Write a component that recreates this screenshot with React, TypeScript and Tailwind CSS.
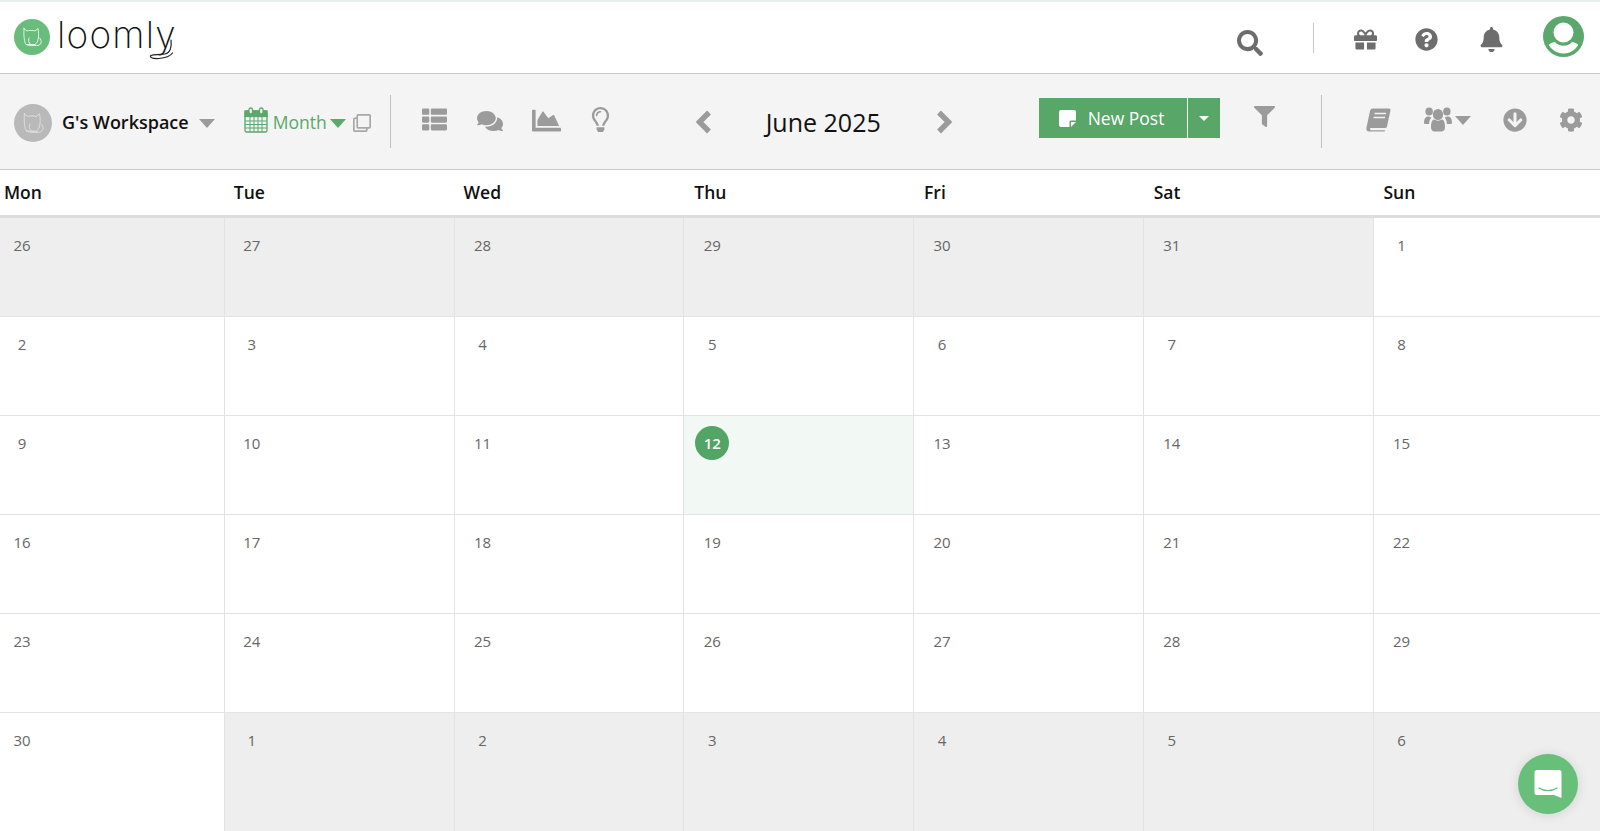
import React from "react";
import {
  FaThList, FaComments, FaChartArea, FaRegLightbulb, FaFilter,
  FaArrowCircleDown, FaCog, FaSearch, FaGift, FaQuestionCircle, FaBell, FaRegClone,
} from "react-icons/fa";

const Cat = ({ color = "#fff", size = 24 }: { color?: string; size?: number }) => (
  <svg width={size} height={size} viewBox="0 0 24 24" fill="none" stroke={color} strokeWidth="0.8" strokeLinecap="round" strokeLinejoin="round">
    <path d="M4 3.5 L7 6 C9 5.2 13 5.2 15 6 L18 3.5 C18.6 7 18.8 10 18.4 13 C18 16 17 18 15 19.5 L6 19.5 C4.5 17 3.5 12 4 3.5 Z" />
    <path d="M9 13 C8 16 9 19 12 20 C15 21 19 21 20.5 19 C22 17 21 14 19.6 13" />
    <path d="M6 19.5 C9 21 13 21 16 20" />
  </svg>
);

const Caret = ({ className }: { className: string }) => (
  <span className={"block w-0 h-0 border-l-[8px] border-r-[8px] border-t-[9px] border-l-transparent border-r-transparent " + className} />
);

const Chevron = ({ dir, className }: { dir: "l" | "r"; className: string }) => (
  <svg width="17" height="24" viewBox="0 0 17 24" className={className} fill="none" stroke="#9b9b9b" strokeWidth="5.4" strokeLinejoin="miter">
    <path d={dir === "l" ? "M14 2.5 L4.5 12 L14 21.5" : "M3 2.5 L12.5 12 L3 21.5"} />
  </svg>
);

const CalendarIcon = () => (
  <svg width="24" height="26" viewBox="0 0 24 26" fill="none" stroke="#5aa86b" strokeWidth="1.3">
    <rect x="1" y="4" width="22" height="21" rx="1.5" fill="#f4f4f4" />
    <rect x="1" y="4" width="22" height="5.5" fill="#5aa86b" />
    <rect x="5" y="1" width="3.5" height="6" rx="1.7" fill="#f4f4f4" />
    <rect x="15.5" y="1" width="3.5" height="6" rx="1.7" fill="#f4f4f4" />
    <path d="M1 14 H23 M1 17.5 H23 M1 21 H23 M6 9.5 V25 M10 9.5 V25 M14 9.5 V25 M18 9.5 V25" strokeWidth="1" />
  </svg>
);

const Note = () => (
  <svg width="17" height="17" viewBox="0 0 17 17">
    <path d="M2 0 H15 a2 2 0 0 1 2 2 V10.5 H12 a1.5 1.5 0 0 0 -1.5 1.5 V17 H2 a2 2 0 0 1 -2 -2 V2 a2 2 0 0 1 2 -2 Z" fill="#fff" />
    <path d="M12 12 H17 L12 17 Z" fill="#fff" />
  </svg>
);

const BookIcon = ({ className }: { className: string }) => (
  <svg width="25" height="24" viewBox="0 0 25 24" className={className}>
    <path d="M7 0.5 H23 a1.5 1.5 0 0 1 1.5 1.8 L21 18.5 a2 2 0 0 1 -2 1.5 H4.5 a1.5 1.5 0 0 0 0 2.2 H19 L18.6 23.5 H3 C0.8 23.5 0 21.5 0.5 19.5 L4 3 C4.4 1.3 5.4 0.5 7 0.5 Z" fill="#9b9b9b" />
    <path d="M8.5 5.5 H20 M7.6 9.5 H19" stroke="#f4f4f4" strokeWidth="1.6" />
  </svg>
);

const UsersIcon = ({ className }: { className: string }) => (
  <svg width="28" height="25" viewBox="0 0 30 25" className={className} fill="#9b9b9b" preserveAspectRatio="none">
    <circle cx="5.5" cy="4.5" r="4" />
    <circle cx="24.5" cy="4.5" r="4" />
    <path d="M0 16 C0 11 2 9.5 5 9.5 L8 10.5 C6.5 12 5.5 14 5.5 17 H2 C0.8 17 0 16.8 0 16 Z" />
    <path d="M30 16 C30 11 28 9.5 25 9.5 L22 10.5 C23.5 12 24.5 14 24.5 17 H28 C29.2 17 30 16.8 30 16 Z" />
    <circle cx="15" cy="7.5" r="5.5" />
    <path d="M7.5 20 C7.5 15 9 12.5 11 12.5 C13 14 17 14 19 12.5 C21 12.5 22.5 15 22.5 20 C22.5 23.5 20.5 24.5 18.5 24.5 H11.5 C9.5 24.5 7.5 23.5 7.5 20 Z" />
  </svg>
);

const Avatar = ({ className }: { className: string }) => (
  <svg width="41" height="41" viewBox="0 0 41 41" className={className}>
    <defs>
      <clipPath id="av"><circle cx="20.5" cy="20.5" r="17" /></clipPath>
    </defs>
    <circle cx="20.5" cy="20.5" r="20.5" fill="#5aa86b" />
    <g clipPath="url(#av)">
      <path d="M3 41 V33 C5 28 9 26.5 12 26 C16 31 25 31 29 26 C32 26.5 36 28 38 33 V41 Z" fill="#fff" />
    </g>
    <circle cx="20.5" cy="16.5" r="10" fill="#fff" />
  </svg>
);

type Cell = { n: number; out?: boolean; today?: boolean };
const weeks: Cell[][] = [
  [26, 27, 28, 29, 30, 31].map((n) => ({ n, out: true })).concat([{ n: 1, out: false }]),
  [2, 3, 4, 5, 6, 7, 8].map((n) => ({ n })),
  [9, 10, 11, 12, 13, 14, 15].map((n) => ({ n, today: n === 12 })),
  [16, 17, 18, 19, 20, 21, 22].map((n) => ({ n })),
  [23, 24, 25, 26, 27, 28, 29].map((n) => ({ n })),
  [{ n: 30 }].concat([1, 2, 3, 4, 5, 6].map((n) => ({ n, out: true } as Cell))) as Cell[],
];
const days = ["Mon", "Tue", "Wed", "Thu", "Fri", "Sat", "Sun"];

export default function App() {
  return (
    <div className="relative w-[1600px] h-[831px] overflow-hidden bg-white font-['Open_Sans',sans-serif]">
      {/* top bar */}
      <header className="h-[74px] border-t-2 border-t-[#e4f0ec] border-b border-b-[#c9c9c9] flex items-center pb-[2px]">
        <div className="ml-[14px] w-[36px] h-[36px] rounded-full bg-[#68bd7b] flex items-center justify-center">
          <Cat />
        </div>
        <div className="relative ml-[7px] h-[44px] w-[120px]">
          <span className="block text-[37px] leading-[40px] tracking-[1.2px] text-[#111] font-['Inter',sans-serif] font-extralight">loomly</span>
          <svg className="absolute left-[88px] top-[22px]" width="36" height="24" viewBox="0 0 36 24" fill="none" stroke="#222" strokeWidth="1.2" strokeLinecap="round">
            <path d="M26 3 C27 10 25 16 20 17 C15 18 8 17 6 18.5 C4 20 7 22 14 21.5 C20 21 25 19.5 27.5 16" />
          </svg>
        </div>
        <div className="ml-auto flex items-center text-[#6d6d6d]">
          <FaSearch size={26} className="mt-[12px]" />
          <div className="w-px h-[30px] bg-[#c8c8c8] ml-[50px] mt-[2px]" />
          <FaGift size={23} className="ml-[40px] mt-[6px]" />
          <FaQuestionCircle size={23} className="ml-[38px] mt-[6px]" />
          <FaBell size={25} className="ml-[41px] mt-[6px]" />
          <Avatar className="ml-[39px] mr-[16px]" />
        </div>
      </header>

      {/* toolbar */}
      <div className="h-[96px] bg-[#f4f4f4] border-b border-b-[#c9c9c9] flex items-center text-[#9b9b9b]">
        <div className="ml-[14px] w-[38px] h-[38px] rounded-full bg-[#b9b9b9] flex items-center justify-center mt-[3px]">
          <Cat color="#e2e2e2" size={26} />
        </div>
        <span className="ml-[10px] text-[18px] font-semibold text-[#111] mt-[1px]">G's Workspace</span>
        <Caret className="ml-[10px] border-t-[#9b9b9b] mt-[4px]" />
        <div className="ml-[29px] mt-[-3px]"><CalendarIcon /></div>
        <span className="ml-[5px] text-[17.5px] text-[#5aa86b] mt-[1px]">Month</span>
        <Caret className="ml-[3px] border-t-[#5aa86b] mt-[4px]" />
        <FaRegClone size={18} className="ml-[7px] mt-[3px] text-[#a8a8a8]" />
        <div className="w-px h-[53px] bg-[#c0c0c0] ml-[19px]" />
        <FaThList size={25} className="ml-[31px] mb-[4px]" />
        <FaComments size={26} className="ml-[30px] mb-[2px]" />
        <FaChartArea size={29} className="ml-[29px] mb-[2px]" />
        <FaRegLightbulb size={25} className="ml-[27px] mb-[4px]" />
        <Chevron dir="l" className="ml-[82px] mt-[1px]" />
        <span className="ml-[54px] w-[120px] text-[25px] text-[#111] mt-[2px] whitespace-nowrap">June 2025</span>
        <Chevron dir="r" className="ml-[50px] mt-[1px]" />
        <div className="ml-[86px] mb-[7px] flex h-[40px] text-white">
          <div className="w-[148px] bg-[#58a668] flex items-center pl-[20px] gap-[12px]">
            <Note />
            <span className="text-[17.5px]">New Post</span>
          </div>
          <div className="ml-px w-[32px] bg-[#58a668] flex items-center justify-center">
            <span className="block w-0 h-0 border-l-[5px] border-r-[5px] border-t-[5px] border-l-transparent border-r-transparent border-t-white" />
          </div>
        </div>
        <FaFilter size={21} className="ml-[34px] mb-[10px]" />
        <div className="w-px h-[53px] bg-[#c0c0c0] ml-[46px]" />
        <BookIcon className="ml-[44px] mb-[4px]" />
        <UsersIcon className="ml-[33px] mb-[4px]" />
        <Caret className="ml-[3px] border-t-[#9b9b9b] mb-[2px]" />
        <FaArrowCircleDown size={24} className="ml-[32px] mb-[4px]" />
        <FaCog size={24} className="ml-[32px] mb-[4px]" />
      </div>

      {/* calendar */}
      <div className="ml-[-5px] w-[1608.25px]">
        <div className="grid grid-cols-7 h-[48px] border-b-[3px] border-b-[#dddddd] items-center pt-[1px]">
          {days.map((d, j) => (
            <div key={d} className={(j >= 3 ? "pl-[10px]" : "pl-[9px]") + " text-[17.5px] font-semibold text-[#111] leading-none"}>{d}</div>
          ))}
        </div>
        {weeks.map((w, i) => (
          <div key={i} className={"grid grid-cols-7 " + (i === 5 ? "h-[118px]" : "h-[99px] border-b border-b-[#e3e3e3]")}>
            {w.map((c, j) => (
              <div
                key={j}
                className={
                  (j >= 2 ? "pl-[11px]" : "pl-[10px]") + " pt-[10px] border-r border-r-[#e3e3e3] " +
                  (c.today ? "bg-[#f2f8f4]" : c.out ? "bg-[#eeeeee]" : "bg-white")
                }
              >
                <div
                  className={
                    "w-[34px] h-[34px] rounded-full flex items-center justify-center text-[15px] " +
                    (c.today ? "bg-[#52a564] text-white font-semibold" : "text-[#666]")
                  }
                >
                  {c.n}
                </div>
              </div>
            ))}
          </div>
        ))}
      </div>

      {/* chat launcher */}
      <div className="absolute left-[1518px] top-[754px] w-[60px] h-[60px] rounded-full bg-[#67bf79] flex items-center justify-center shadow-[0_1px_12px_rgba(0,0,0,0.12)]">
        <svg width="28" height="30" viewBox="0 0 28 30">
          <path d="M3 1 H25 a2.5 2.5 0 0 1 2.5 2.5 V29 L20 26 H3 a2.5 2.5 0 0 1 -2.5 -2.5 V3.5 A2.5 2.5 0 0 1 3 1 Z" fill="#fff" />
          <path d="M5 19 C10 22.5 18 22.5 23 19" fill="none" stroke="#67bf79" strokeWidth="1.4" strokeLinecap="round" />
        </svg>
      </div>
    </div>
  );
}
